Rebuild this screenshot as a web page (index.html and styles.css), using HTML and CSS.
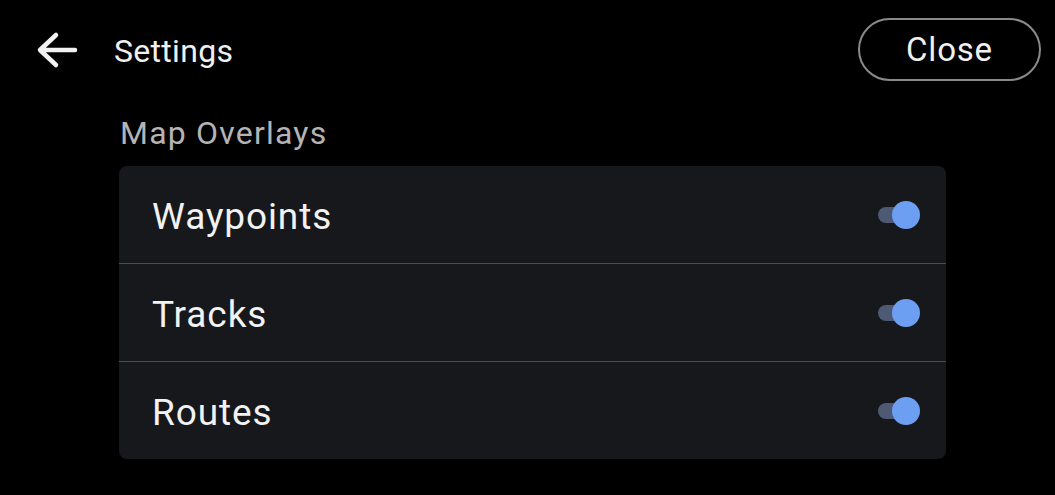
FILE: index.html
```html
<!DOCTYPE html>
<html>
<head>
<meta charset="utf-8">
<link rel="stylesheet" href="styles.css">
</head>
<body>
<div class="screen">
  <header class="topbar">
    <div class="left">
      <svg class="back" width="44" height="40" viewBox="0 0 44 40">
        <path d="M40 20 H6 M21 5 L5 20 L21 35" fill="none" stroke="#f2f2f2" stroke-width="4.5" stroke-linecap="round" stroke-linejoin="round"/>
      </svg>
      <span class="title">Settings</span>
    </div>
    <button class="close">Close</button>
  </header>
  <section class="content">
    <div class="section-label">Map Overlays</div>
    <div class="card">
      <div class="row"><span class="label">Waypoints</span><span class="toggle"><span class="track"></span><span class="knob"></span></span></div>
      <div class="row"><span class="label">Tracks</span><span class="toggle"><span class="track"></span><span class="knob"></span></span></div>
      <div class="row"><span class="label">Routes</span><span class="toggle"><span class="track"></span><span class="knob"></span></span></div>
    </div>
  </section>
</div>
</body>
</html>
```

FILE: styles.css
```css
html, body {
  margin: 0;
  padding: 0;
  background: #000;
}
body {
  width: 1055px;
  height: 495px;
  overflow: hidden;
  font-family: Roboto, "Liberation Sans", sans-serif;
  color: #f0f0f0;
}
.screen {
  display: flex;
  flex-direction: column;
}
.topbar {
  display: flex;
  align-items: center;
  justify-content: space-between;
  padding: 18px 14px 0 35px;
  height: 63px;
}
.left {
  display: flex;
  align-items: center;
  gap: 35px;
}
.back {
  display: block;
}
.title {
  font-size: 32px;
  color: #f0f0f0;
  letter-spacing: 0.3px;
  position: relative;
  top: 1px;
}
.close {
  width: 183px;
  height: 63px;
  border: 2px solid #8a8a8a;
  border-radius: 32px;
  background: #000;
  color: #f0f0f0;
  font-family: Roboto, "Liberation Sans", sans-serif;
  font-size: 33px;
  letter-spacing: 0.8px;
  padding: 0;
}
.content {
  padding-left: 119px;
  width: 827px;
}
.section-label {
  margin-top: 33px;
  font-size: 32px;
  color: #b4b4b4;
  height: 52px;
  line-height: 38px;
  padding-left: 1px;
  letter-spacing: 1.2px;
}
.card {
  background: #16181c;
  border-radius: 8px;
  display: flex;
  flex-direction: column;
}
.row {
  height: 97px;
  display: flex;
  align-items: center;
  justify-content: space-between;
  padding: 0 26px 0 33px;
  border-top: 1px solid #4a4c50;
}
.row:first-child {
  border-top: none;
}
.label {
  font-size: 37px;
  color: #f2f2f2;
  letter-spacing: 0.9px;
  position: relative;
  top: 2px;
}
.toggle {
  position: relative;
  width: 42px;
  height: 28px;
  display: block;
}
.track {
  position: absolute;
  left: 0;
  top: 6px;
  width: 36px;
  height: 16px;
  border-radius: 8px;
  background: #4e5a74;
}
.knob {
  position: absolute;
  right: 0;
  top: 0;
  width: 28px;
  height: 28px;
  border-radius: 50%;
  background: #6c9ef2;
}
```
